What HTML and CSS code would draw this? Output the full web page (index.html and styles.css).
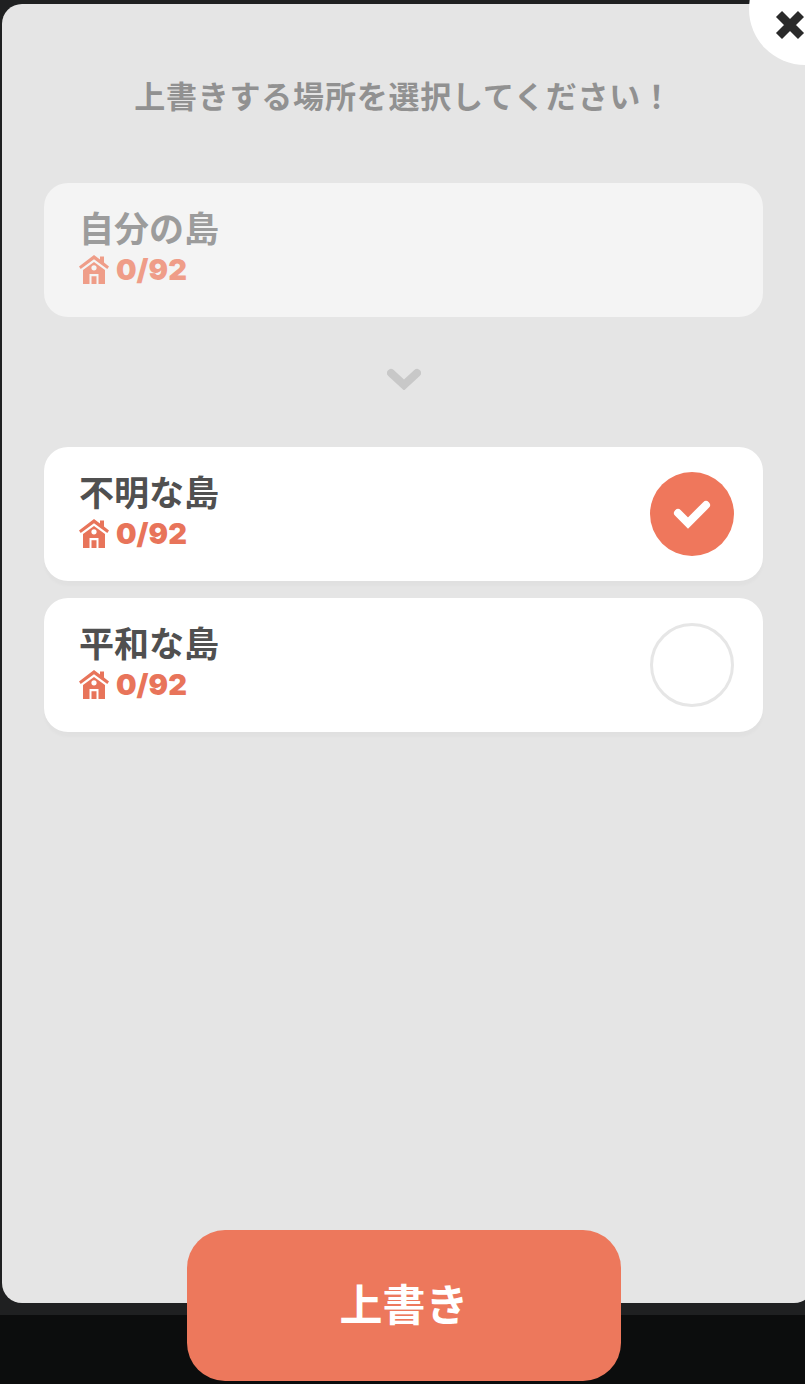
FILE: index.html
```html
<!DOCTYPE html>
<html lang="ja">
<head>
<meta charset="utf-8">
<title>上書き</title>
<link rel="stylesheet" href="styles.css">
</head>
<body>
<div class="screen">
  <main class="modal">
    <h1 class="title">上書きする場所を選択してください！</h1>
    <section class="card card-source">
      <div class="info">
        <div class="name">自分の島</div>
        <div class="count">
          <svg class="house" viewBox="0 0 30 30"><path class="house-shape" fill-rule="evenodd" d="M15 1 L21 5.5 V2.5 H25 V8.6 L30 12.6 L28.3 15 L15 5.2 L1.7 15 L0 12.6 Z M15 8 L26 16 V30 H19.5 V20 H10.5 V30 H4 V16 Z M15 11.2 A2.6 2.6 0 1 0 15 16.4 A2.6 2.6 0 1 0 15 11.2 Z M12.5 22.2 H17.5 V30 H12.5 Z"/></svg>
          <span>0/92</span>
        </div>
      </div>
    </section>
    <div class="arrow">
      <svg viewBox="0 0 34 22" class="chevron"><path d="M4 5 L17 17 L30 5" /></svg>
    </div>
    <div class="list">
      <section class="card">
        <div class="info">
          <div class="name">不明な島</div>
          <div class="count">
            <svg class="house" viewBox="0 0 30 30"><path class="house-shape" fill-rule="evenodd" d="M15 1 L21 5.5 V2.5 H25 V8.6 L30 12.6 L28.3 15 L15 5.2 L1.7 15 L0 12.6 Z M15 8 L26 16 V30 H19.5 V20 H10.5 V30 H4 V16 Z M15 11.2 A2.6 2.6 0 1 0 15 16.4 A2.6 2.6 0 1 0 15 11.2 Z M12.5 22.2 H17.5 V30 H12.5 Z"/></svg>
            <span>0/92</span>
          </div>
        </div>
        <div class="radio radio-on">
          <svg viewBox="0 0 84 84" class="check"><path d="M28 41 L38 51 L56 33" /></svg>
        </div>
      </section>
      <section class="card">
        <div class="info">
          <div class="name">平和な島</div>
          <div class="count">
            <svg class="house" viewBox="0 0 30 30"><path class="house-shape" fill-rule="evenodd" d="M15 1 L21 5.5 V2.5 H25 V8.6 L30 12.6 L28.3 15 L15 5.2 L1.7 15 L0 12.6 Z M15 8 L26 16 V30 H19.5 V20 H10.5 V30 H4 V16 Z M15 11.2 A2.6 2.6 0 1 0 15 16.4 A2.6 2.6 0 1 0 15 11.2 Z M12.5 22.2 H17.5 V30 H12.5 Z"/></svg>
            <span>0/92</span>
          </div>
        </div>
        <div class="radio"></div>
      </section>
    </div>
  </main>
  <button class="close" aria-label="閉じる">
    <svg viewBox="0 0 30 30" class="close-x"><path d="M4 4 L26 26 M26 4 L4 26" /></svg>
  </button>
  <button class="submit">上書き</button>
</div>
</body>
</html>
```

FILE: styles.css
```css
* { box-sizing: border-box; }
html, body { margin: 0; padding: 0; }
body {
  width: 805px;
  height: 1384px;
  overflow: hidden;
  background: #0c0d0d;
  font-family: "Noto Sans CJK JP", "Noto Sans", sans-serif;
}
.screen {
  position: relative;
  width: 805px;
  height: 1384px;
  overflow: hidden;
  background: linear-gradient(#1f2021 0, #1f2021 1315px, #0c0d0d 1315px);
  padding: 4px 0 0 2px;
}
.modal {
  width: 812px;
  height: 1299px;
  background: #e5e5e5;
  border-radius: 20px;
  padding: 0 51px 0 42px;
  display: flex;
  flex-direction: column;
}
.title {
  margin: 68px 0 0;
  height: 46px;
  line-height: 46px;
  font-size: 31px;
  font-weight: 700;
  color: #919191;
  text-align: center;
  letter-spacing: 0.8px;
}
.card {
  height: 134px;
  background: #fff;
  border-radius: 24px;
  box-shadow: 0 5px 3px rgba(0, 0, 0, 0.02);
  display: flex;
  align-items: center;
  justify-content: space-between;
  padding: 0 29px 0 35px;
}
.card-source {
  margin-top: 65px;
  background: #f4f4f4;
  box-shadow: none;
}
.card-source .name { color: #9c9c9c; }
.card-source .count { color: #ef9d88; }
.card-source .house-shape { fill: #ef9d88; }
.info { padding-bottom: 9px; }
.name {
  font-size: 35px;
  line-height: 44px;
  font-weight: 700;
  color: #505050;
}
.count {
  display: flex;
  align-items: center;
  gap: 7px;
  height: 34px;
  margin-top: 3px;
  font-family: "Inter", "Noto Sans", sans-serif;
  font-size: 29px;
  font-weight: 900;
  color: #e8745a;
}
.house { width: 30px; height: 30px; display: block; }
.house-shape { fill: #e8745a; }
.arrow {
  height: 130px;
  padding-bottom: 6px;
  display: flex;
  align-items: center;
  justify-content: center;
}
.chevron { width: 34px; height: 22px; }
.chevron path {
  fill: none;
  stroke: #c8c8c8;
  stroke-width: 8;
  stroke-linecap: round;
  stroke-linejoin: miter;
}
.list { display: flex; flex-direction: column; gap: 17px; }
.radio {
  width: 84px;
  height: 84px;
  border-radius: 50%;
  border: 3px solid #e6e6e6;
  background: #fff;
}
.radio-on { border: 0; background: #ef775c; }
.check { width: 84px; height: 84px; display: block; }
.check path {
  fill: none;
  stroke: #fff;
  stroke-width: 8;
  stroke-linecap: round;
}
.close {
  position: absolute;
  left: 749px;
  top: -47px;
  width: 112px;
  height: 112px;
  padding: 0;
  border: 0;
  border-radius: 50%;
  background: #fff;
}
.close-x {
  position: absolute;
  left: 26px;
  top: 57px;
  width: 30px;
  height: 30px;
}
.close-x path {
  fill: none;
  stroke: #2a2a2a;
  stroke-width: 8.5;
  stroke-linecap: butt;
}
.submit {
  position: absolute;
  left: 187px;
  top: 1230px;
  width: 434px;
  height: 151px;
  border: 0;
  padding: 0 0 8px;
  border-radius: 38px;
  background: #ed785c;
  color: #fff;
  font-family: inherit;
  font-size: 43px;
  font-weight: 700;
}
```
